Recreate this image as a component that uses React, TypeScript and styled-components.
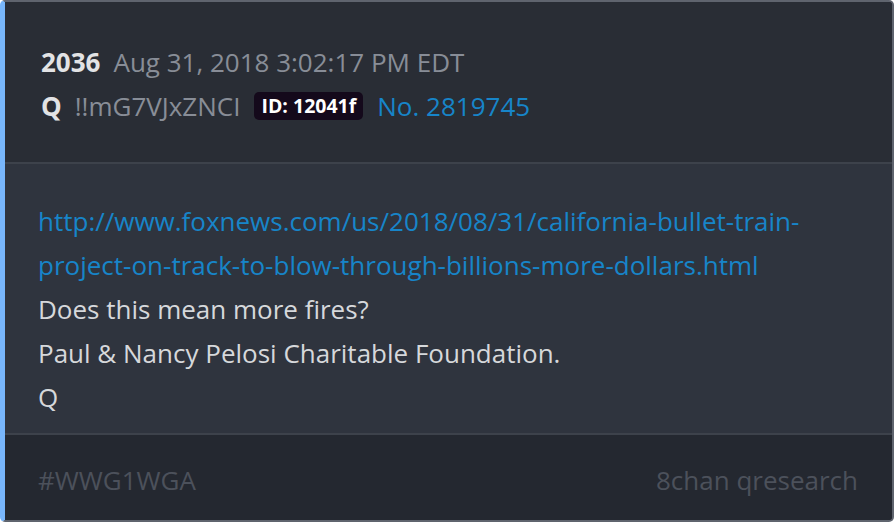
import React from "react";
import styled, { createGlobalStyle } from "styled-components";

const Global = createGlobalStyle`
  html, body { margin: 0; padding: 0; background: #ffffff; }
  body { font-family: "Open Sans", "Noto Sans", sans-serif; }
  * { box-sizing: border-box; }
`;

const Card = styled.div`
  width: 894px;
  height: 522px;
  display: flex;
  flex-direction: column;
  border-left: 5px solid #78b6fb;
  border-top: 2px solid #5f646e;
  border-right: 2px solid #5f646e;
  border-bottom: 2px solid #5f646e;
  border-radius: 5px;
  overflow: hidden;
  background: #292d35;
`;

const Header = styled.div`
  background: #292d35;
  padding: 38px 0 0 36px;
  height: 162px;
  flex-shrink: 0;
  border-bottom: 2px solid #3d424b;
`;

const Line = styled.div`
  display: flex;
  align-items: center;
  height: 44px;
  white-space: nowrap;
`;

const Num = styled.span`
  font-weight: 700;
  font-size: 26px;
  color: #e2e3e5;
  margin-right: 13px;
`;

const Meta = styled.span<{ $color?: string }>`
  font-size: 26px;
  color: ${(p) => p.$color || "#888d97"};
  margin-right: 14px;
`;

const Badge = styled.span`
  background: #14091b;
  color: #ffffff;
  font-weight: 700;
  font-size: 19.5px;
  line-height: 28px;
  height: 28px;
  border-radius: 5px;
  padding: 0 7px;
  margin-right: 14px;
`;

const Body = styled.div`
  background: #2f343e;
  flex: 1;
  padding: 35px 0 0 33px;
  border-bottom: 2px solid #3d424b;
`;

const Text = styled.div`
  font-size: 26px;
  line-height: 44px;
  color: #d6d8db;
  white-space: nowrap;
`;

const Link = styled.a`
  color: #1785c9;
  text-decoration: none;
`;

const Footer = styled.div`
  background: #242830;
  height: 85px;
  flex-shrink: 0;
  display: flex;
  align-items: center;
  justify-content: space-between;
  padding: 4px 34px 0 33px;
  font-size: 26px;
  color: #4c515b;
`;

export default function App() {
  return (
    <>
      <Global />
      <Card>
        <Header>
          <Line>
            <Num>2036</Num>
            <Meta>Aug 31, 2018 3:02:17 PM EDT</Meta>
          </Line>
          <Line>
            <Num>Q</Num>
            <Meta>!!mG7VJxZNCI</Meta>
            <Badge>ID: 12041f</Badge>
            <Meta $color="#1785c9">No. 2819745</Meta>
          </Line>
        </Header>
        <Body>
          <Text>
            <Link href="#">
              http://www.foxnews.com/us/2018/08/31/california-bullet-train-
              <br />
              project-on-track-to-blow-through-billions-more-dollars.html
            </Link>
          </Text>
          <Text>Does this mean more fires?</Text>
          <Text>Paul &amp; Nancy Pelosi Charitable Foundation.</Text>
          <Text>Q</Text>
        </Body>
        <Footer>
          <span>#WWG1WGA</span>
          <span>8chan qresearch</span>
        </Footer>
      </Card>
    </>
  );
}
